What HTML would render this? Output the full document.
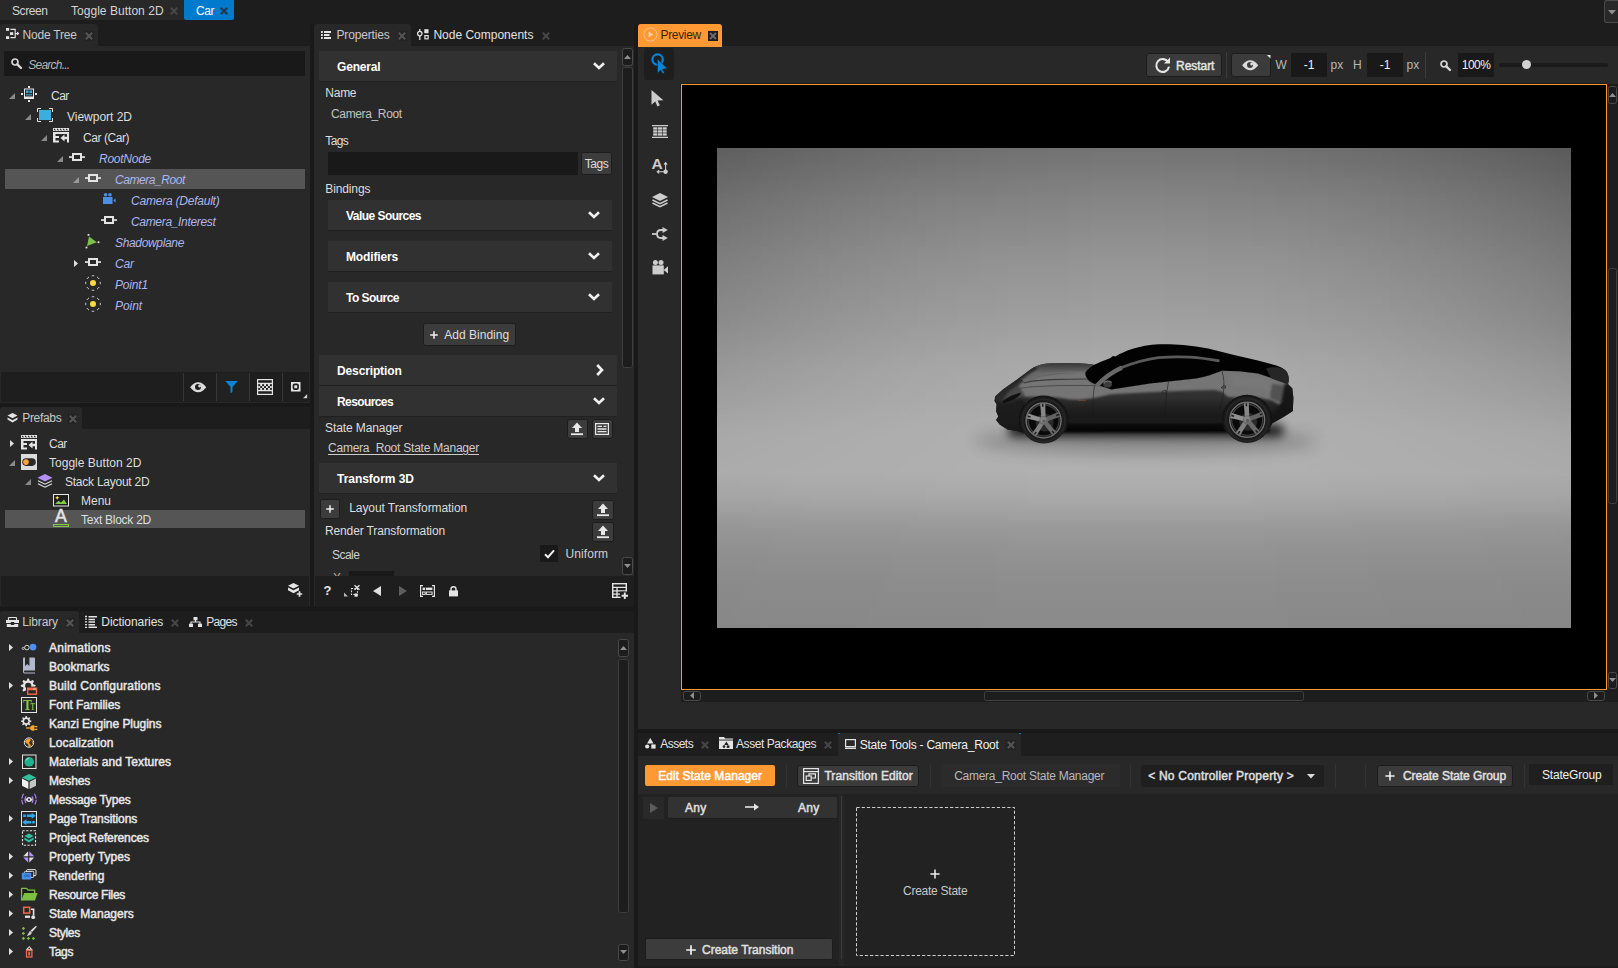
<!DOCTYPE html>
<html lang="en"><head><meta charset="utf-8"><title>Kanzi Studio - Car</title>
<style>
html,body{margin:0;padding:0;overflow:hidden;}
body{width:1618px;height:968px;overflow:hidden;background:#1d1d1d;font-family:"Liberation Sans", sans-serif;font-size:12px;color:#dedede;position:relative;}
div,svg,.t{position:absolute;box-sizing:border-box;}
.t{white-space:pre;display:block;}
svg{overflow:visible;}
</style></head><body>
<div style="left:310px;top:24px;width:4px;height:583px;background:#191919;"></div>
<div style="left:634px;top:24px;width:4px;height:944px;background:#191919;"></div>
<div style="left:0px;top:403px;width:310px;height:4px;background:#191919;"></div>
<div style="left:0px;top:607px;width:634px;height:4px;background:#191919;"></div>
<div style="left:0px;top:0px;width:184px;height:20px;background:#282828;"></div>
<span class="t" style="top:2.5px;line-height:16px;font-size:12px;color:#d4d4d4;letter-spacing:-0.405px;left:12px;">Screen</span>
<span class="t" style="top:2.5px;line-height:16px;font-size:12px;color:#d4d4d4;letter-spacing:0.034px;left:71px;">Toggle Button 2D</span>
<svg style="left:174px;top:10.8px;" width="1" height="1" viewBox="0 0 1 1"><path d="M-3.2 -3.2L3.2 3.2M3.2 -3.2L-3.2 3.2" stroke="#474747" stroke-width="2" fill="none"/></svg>
<div style="left:184px;top:0px;width:50px;height:20px;background:#007acc;border-radius:0 0 2px 2px;"></div>
<span class="t" style="top:2.5px;line-height:16px;font-size:12px;color:#ffffff;letter-spacing:-0.381px;left:196px;">Car</span>
<svg style="left:224.3px;top:10.8px;" width="1" height="1" viewBox="0 0 1 1"><path d="M-3.3 -3.3L3.3 3.3M3.3 -3.3L-3.3 3.3" stroke="#1e3a52" stroke-width="2.2" fill="none"/></svg>
<div style="left:1604px;top:0px;width:14px;height:23px;background:#282828;border:1px solid #4a4a4a;border-right:none;border-radius:3px 0 0 3px;"></div>
<svg style="left:1608.0px;top:9.55px;" width="8" height="4.5" viewBox="0 0 8 4.5"><path d="M0 0H8L4.0 4.5Z" fill="#8f8f8f"/></svg>
<div style="left:0px;top:24px;width:98px;height:22px;background:#282828;border-radius:3px 3px 0 0;"></div>
<svg style="left:5.6px;top:28px;" width="13" height="11" viewBox="0 0 13 11"><rect x="0" y="0" width="3.2" height="2.8" fill="#e4e4e4"/><rect x="4" y="4.2" width="3.2" height="2.8" fill="#e4e4e4"/><rect x="0" y="8.2" width="3.2" height="2.8" fill="#e4e4e4"/><path d="M4.5 1.4H9.2V9.6H4.5M9.2 5.6H12.5M11.2 4.2l1.3 1.4-1.3 1.4" stroke="#e4e4e4" stroke-width="1.1" fill="none"/></svg>
<span class="t" style="top:26.6px;line-height:16px;font-size:12px;color:#c9c9c9;letter-spacing:-0.227px;left:22.6px;">Node Tree</span>
<div style="left:84.5px;top:31px;width:9px;height:10px;background:#232323;"></div>
<svg style="left:89px;top:35.8px;" width="1" height="1" viewBox="0 0 1 1"><path d="M-3.2 -3.2L3.2 3.2M3.2 -3.2L-3.2 3.2" stroke="#555" stroke-width="2" fill="none"/></svg>
<div style="left:0px;top:46px;width:310px;height:357px;background:#282828;"></div>
<div style="left:4px;top:51px;width:301px;height:25px;background:#191919;"></div>
<svg style="left:10.8px;top:58.2px;" width="11" height="11" viewBox="0 0 11 11"><circle cx="4" cy="4" r="3" fill="none" stroke="#d8d8d8" stroke-width="1.7"/><path d="M6.3 6.3L10 10" stroke="#d8d8d8" stroke-width="2.4" stroke-linecap="round"/></svg>
<span class="t" style="top:56.599999999999994px;line-height:16px;font-size:12px;color:#b4b4b4;font-style:italic;letter-spacing:-0.781px;left:28.3px;">Search...</span>
<svg style="left:9.3px;top:92.6px;" width="6" height="6" viewBox="0 0 6 6"><path d="M6 0V6H0Z" fill="#8a8a8a"/></svg>
<svg style="left:21px;top:86.0px;" width="16" height="16" viewBox="0 0 16 16"><rect x="7" y="0" width="2" height="2" fill="#e4e4e4"/><rect x="7" y="14" width="2" height="2" fill="#e4e4e4"/><rect x="0" y="7" width="2" height="2" fill="#e4e4e4"/><rect x="14" y="7" width="2" height="2" fill="#e4e4e4"/>
<rect x="3" y="2.5" width="10" height="10.5" fill="#e4e4e4"/><rect x="4" y="3.5" width="8" height="7" fill="#2a2a2a"/>
<rect x="5" y="4.5" width="2.5" height="2.5" fill="#38b0e6"/><rect x="8.5" y="4.5" width="2.5" height="2.5" fill="#38b0e6"/><rect x="5" y="8.3" width="6" height="1" fill="#38b0e6"/></svg>
<span class="t" style="top:87.5px;line-height:16px;font-size:12px;color:#dedede;letter-spacing:-0.515px;left:51px;">Car</span>
<svg style="left:25.3px;top:113.6px;" width="6" height="6" viewBox="0 0 6 6"><path d="M6 0V6H0Z" fill="#8a8a8a"/></svg>
<svg style="left:37px;top:107.7px;" width="16" height="14" viewBox="0 0 16 14"><rect x="2" y="2" width="12" height="10" fill="#3aaedd"/>
<path d="M0.5 4V0.5H4M12 0.5H15.5V4M15.5 10V13.5H12M4 13.5H0.5V10" stroke="#e4e4e4" stroke-width="1" fill="none"/></svg>
<span class="t" style="top:108.5px;line-height:16px;font-size:12px;color:#dedede;letter-spacing:-0.014px;left:67px;">Viewport 2D</span>
<svg style="left:41.3px;top:134.6px;" width="6" height="6" viewBox="0 0 6 6"><path d="M6 0V6H0Z" fill="#8a8a8a"/></svg>
<svg style="left:53px;top:128.0px;" width="16" height="15" viewBox="0 0 16 15"><rect x="0" y="0" width="16" height="3" fill="#e4e4e4"/>
<path d="M1 0.8l1.5 1.6M4 0.8l1.5 1.6M7 0.8l1.5 1.6M10 0.8l1.5 1.6M13 0.8l1.5 1.6" stroke="#282828" stroke-width="1.1"/>
<path d="M0 4H16V6H2.5V8H6V10H2.5V12.5H6V14.5H0Z" fill="#e4e4e4"/>
<path d="M7.5 10L11.5 6.5V8.7H16V11.3H11.5V13.5Z" fill="#e4e4e4"/><rect x="14" y="6" width="2" height="8.5" fill="#e4e4e4"/></svg>
<span class="t" style="top:129.5px;line-height:16px;font-size:12px;color:#dedede;letter-spacing:-0.444px;left:83px;">Car (Car)</span>
<svg style="left:57.3px;top:155.6px;" width="6" height="6" viewBox="0 0 6 6"><path d="M6 0V6H0Z" fill="#8a8a8a"/></svg>
<svg style="left:69px;top:153.0px;" width="16" height="8" viewBox="0 0 16 8"><rect x="4" y="1" width="8" height="6" fill="none" stroke="#e4e4e4" stroke-width="2"/><rect x="0" y="3.2" width="3.5" height="1.7" fill="#e4e4e4"/><rect x="12.5" y="3.2" width="3.5" height="1.7" fill="#e4e4e4"/></svg>
<span class="t" style="top:150.5px;line-height:16px;font-size:12px;color:#aeb6ee;font-style:italic;letter-spacing:-0.256px;left:99px;">RootNode</span>
<div style="left:5px;top:169.0px;width:300px;height:20px;background:#555555;"></div>
<svg style="left:73.3px;top:176.6px;" width="6" height="6" viewBox="0 0 6 6"><path d="M6 0V6H0Z" fill="#9a9a9a"/></svg>
<svg style="left:85px;top:174.0px;" width="16" height="8" viewBox="0 0 16 8"><rect x="4" y="1" width="8" height="6" fill="none" stroke="#e4e4e4" stroke-width="2"/><rect x="0" y="3.2" width="3.5" height="1.7" fill="#e4e4e4"/><rect x="12.5" y="3.2" width="3.5" height="1.7" fill="#e4e4e4"/></svg>
<span class="t" style="top:171.5px;line-height:16px;font-size:12px;color:#aeb6ee;font-style:italic;letter-spacing:-0.428px;left:115px;">Camera_Root</span>
<svg style="left:102.6px;top:193.2px;" width="13" height="11" viewBox="0 0 13 11"><circle cx="2.6" cy="1.8" r="1.8" fill="#4b8fe9"/><circle cx="7" cy="1.8" r="1.8" fill="#4b8fe9"/><rect x="0" y="4" width="9.5" height="7" fill="#4b8fe9"/><path d="M10.3 7.5L12.5 5.3V9.7Z" fill="#4b8fe9"/></svg>
<span class="t" style="top:192.5px;line-height:16px;font-size:12px;color:#aeb6ee;font-style:italic;letter-spacing:-0.221px;left:131px;">Camera (Default)</span>
<svg style="left:101px;top:216.0px;" width="16" height="8" viewBox="0 0 16 8"><rect x="4" y="1" width="8" height="6" fill="none" stroke="#e4e4e4" stroke-width="2"/><rect x="0" y="3.2" width="3.5" height="1.7" fill="#e4e4e4"/><rect x="12.5" y="3.2" width="3.5" height="1.7" fill="#e4e4e4"/></svg>
<span class="t" style="top:213.5px;line-height:16px;font-size:12px;color:#aeb6ee;font-style:italic;letter-spacing:-0.325px;left:131px;">Camera_Interest</span>
<svg style="left:85.4px;top:233.5px;" width="15" height="15" viewBox="0 0 15 15"><path d="M4 2.5L11.8 8.2L2 12Z" fill="#7dc04b"/><rect x="2.6" y="0" width="1.8" height="1.8" fill="#e4e4e4"/><rect x="12.6" y="7.3" width="1.8" height="1.8" fill="#e4e4e4"/><rect x="0.6" y="12.6" width="1.8" height="1.8" fill="#e4e4e4"/></svg>
<span class="t" style="top:234.5px;line-height:16px;font-size:12px;color:#aeb6ee;font-style:italic;letter-spacing:-0.339px;left:115px;">Shadowplane</span>
<svg style="left:74.3px;top:260.0px;" width="4" height="7" viewBox="0 0 4 7"><path d="M0 0L4 3.5L0 7Z" fill="#e0e0e0"/></svg>
<svg style="left:85px;top:258.0px;" width="16" height="8" viewBox="0 0 16 8"><rect x="4" y="1" width="8" height="6" fill="none" stroke="#e4e4e4" stroke-width="2"/><rect x="0" y="3.2" width="3.5" height="1.7" fill="#e4e4e4"/><rect x="12.5" y="3.2" width="3.5" height="1.7" fill="#e4e4e4"/></svg>
<span class="t" style="top:255.5px;line-height:16px;font-size:12px;color:#aeb6ee;font-style:italic;letter-spacing:-0.215px;left:115px;">Car</span>
<svg style="left:85px;top:275.3px;" width="16" height="16" viewBox="0 0 16 16"><circle cx="8" cy="8" r="7.3" fill="none" stroke="#e4e4e4" stroke-width="1" stroke-dasharray="2.6 3.1" stroke-dashoffset="1.3"/><circle cx="8" cy="8" r="3" fill="#ffd83e"/></svg>
<span class="t" style="top:276.5px;line-height:16px;font-size:12px;color:#aeb6ee;font-style:italic;letter-spacing:-0.172px;left:115px;">Point1</span>
<svg style="left:85px;top:296.3px;" width="16" height="16" viewBox="0 0 16 16"><circle cx="8" cy="8" r="7.3" fill="none" stroke="#e4e4e4" stroke-width="1" stroke-dasharray="2.6 3.1" stroke-dashoffset="1.3"/><circle cx="8" cy="8" r="3" fill="#ffd83e"/></svg>
<span class="t" style="top:297.5px;line-height:16px;font-size:12px;color:#aeb6ee;font-style:italic;letter-spacing:-0.072px;left:115px;">Point</span>
<div style="left:1px;top:372px;width:308px;height:30px;background:#1e1e1e;"></div>
<div style="left:183px;top:373px;width:1px;height:28px;background:#383838;"></div>
<div style="left:216px;top:373px;width:1px;height:28px;background:#383838;"></div>
<div style="left:249px;top:373px;width:1px;height:28px;background:#383838;"></div>
<div style="left:282px;top:373px;width:1px;height:28px;background:#383838;"></div>
<svg style="left:189.8px;top:381.8px;" width="16.4" height="10.4" viewBox="0 0 16.4 10.4"><path d="M0.2 5.2Q3.8 0.2 8.2 0.2Q12.6 0.2 16.2 5.2Q12.6 10.2 8.2 10.2Q3.8 10.2 0.2 5.2Z" fill="#dcdcdc"/><circle cx="8" cy="5" r="3" fill="#1e1e1e"/><circle cx="9.6" cy="4" r="1.5" fill="#dcdcdc"/></svg>
<div style="left:217px;top:373px;width:32px;height:28px;background:#212121;"></div>
<svg style="left:224.5px;top:381px;" width="13" height="12.5" viewBox="0 0 13 12.5"><path d="M0.3 0H12.7L7.5 6V11L5.5 12.3V6Z" fill="#0a84d8"/></svg>
<svg style="left:257px;top:379px;" width="16" height="16" viewBox="0 0 16 16"><rect x="0.6" y="0.6" width="14.8" height="14.8" fill="none" stroke="#e4e4e4" stroke-width="1.2"/><path d="M1 4.4H15M1 11.6H15" stroke="#e4e4e4" stroke-width="1.2"/><rect x="1.2" y="5" width="13.6" height="6" fill="#e4e4e4"/><rect x="1.20" y="5.20" width="1.95" height="1.9" fill="#1e1e1e"/><rect x="5.10" y="5.20" width="1.95" height="1.9" fill="#1e1e1e"/><rect x="9.00" y="5.20" width="1.95" height="1.9" fill="#1e1e1e"/><rect x="12.90" y="5.20" width="1.95" height="1.9" fill="#1e1e1e"/><rect x="3.15" y="7.10" width="1.95" height="1.9" fill="#1e1e1e"/><rect x="7.05" y="7.10" width="1.95" height="1.9" fill="#1e1e1e"/><rect x="10.95" y="7.10" width="1.95" height="1.9" fill="#1e1e1e"/><rect x="1.20" y="9.00" width="1.95" height="1.9" fill="#1e1e1e"/><rect x="5.10" y="9.00" width="1.95" height="1.9" fill="#1e1e1e"/><rect x="9.00" y="9.00" width="1.95" height="1.9" fill="#1e1e1e"/><rect x="12.90" y="9.00" width="1.95" height="1.9" fill="#1e1e1e"/></svg>
<svg style="left:290.7px;top:381.8px;" width="9.5" height="9.5" viewBox="0 0 9.5 9.5"><rect width="9.5" height="9.5" fill="#e4e4e4"/><rect x="1.6" y="1.6" width="6.3" height="6.3" rx="2" fill="#1e1e1e"/><rect x="3.3" y="3.3" width="2.9" height="2.9" fill="#e4e4e4"/></svg>
<svg style="left:303px;top:394px;" width="4.2" height="4.2" viewBox="0 0 4.2 4.2"><path d="M4.2 0V4.2H0Z" fill="#d0d0d0"/></svg>
<div style="left:0px;top:407px;width:82px;height:22px;background:#282828;border-radius:3px 3px 0 0;"></div>
<svg style="left:6.6px;top:412.6px;" width="11" height="10" viewBox="0 0 11 10"><path d="M5.5 0L10.5 2.6L5.5 5.2L0.5 2.6Z" fill="#e4e4e4"/><path d="M0.5 4.6L5.5 7.2L10.5 4.6V6.6L5.5 9.4L0.5 6.6Z" fill="#e4e4e4"/></svg>
<span class="t" style="top:410.0px;line-height:16px;font-size:12px;color:#c9c9c9;letter-spacing:-0.337px;left:22.3px;">Prefabs</span>
<div style="left:68px;top:414px;width:9px;height:10px;background:#232323;"></div>
<svg style="left:72.8px;top:419px;" width="1" height="1" viewBox="0 0 1 1"><path d="M-3.2 -3.2L3.2 3.2M3.2 -3.2L-3.2 3.2" stroke="#555" stroke-width="2" fill="none"/></svg>
<div style="left:0px;top:429px;width:310px;height:177px;background:#282828;"></div>
<svg style="left:9.9px;top:440.0px;" width="4" height="7" viewBox="0 0 4 7"><path d="M0 0L4 3.5L0 7Z" fill="#e0e0e0"/></svg>
<svg style="left:21px;top:434.5px;" width="16" height="15" viewBox="0 0 16 15"><rect x="0" y="0" width="16" height="3" fill="#e4e4e4"/>
<path d="M1 0.8l1.5 1.6M4 0.8l1.5 1.6M7 0.8l1.5 1.6M10 0.8l1.5 1.6M13 0.8l1.5 1.6" stroke="#282828" stroke-width="1.1"/>
<path d="M0 4H16V6H2.5V8H6V10H2.5V12.5H6V14.5H0Z" fill="#e4e4e4"/>
<path d="M7.5 10L11.5 6.5V8.7H16V11.3H11.5V13.5Z" fill="#e4e4e4"/><rect x="14" y="6" width="2" height="8.5" fill="#e4e4e4"/></svg>
<span class="t" style="top:435.5px;line-height:16px;font-size:12px;color:#dedede;letter-spacing:-0.515px;left:49px;">Car</span>
<svg style="left:9.3px;top:459.6px;" width="6" height="6" viewBox="0 0 6 6"><path d="M6 0V6H0Z" fill="#8a8a8a"/></svg>
<svg style="left:21px;top:454.0px;" width="16" height="16" viewBox="0 0 16 16"><rect width="16" height="16" fill="#dcdcdc"/><rect x="1.2" y="4.3" width="13.6" height="7.6" rx="3.8" fill="#2a2a2a"/><circle cx="5" cy="8.1" r="2.8" fill="#ffa33a"/></svg>
<span class="t" style="top:454.5px;line-height:16px;font-size:12px;color:#dedede;letter-spacing:0.021px;left:49px;">Toggle Button 2D</span>
<svg style="left:25.3px;top:478.6px;" width="6" height="6" viewBox="0 0 6 6"><path d="M6 0V6H0Z" fill="#8a8a8a"/></svg>
<svg style="left:37px;top:473.9px;" width="16" height="14" viewBox="0 0 16 14"><path d="M8 0L15.5 3.7L8 7.4L0.5 3.7Z" fill="#b48ff5"/><path d="M1 6.7L8 10.2L15 6.7M1 9.7L8 13.2L15 9.7" stroke="#e4e4e4" stroke-width="1.1" fill="none"/></svg>
<span class="t" style="top:473.5px;line-height:16px;font-size:12px;color:#dedede;letter-spacing:-0.244px;left:65px;">Stack Layout 2D</span>
<svg style="left:53px;top:493.8px;" width="16" height="12.5" viewBox="0 0 16 12.5"><rect x="0.5" y="0.5" width="15" height="11.5" fill="#1e1e1e" stroke="#e4e4e4" stroke-width="1"/><path d="M2 10L5.5 6.8L8 8.6L11 5.5L14 10Z" fill="#86c84a"/><path d="M4.2 1.8l.7 1.3 1.3.7-1.3.7-.7 1.3-.7-1.3-1.3-.7 1.3-.7z" fill="#ffe23a"/></svg>
<span class="t" style="top:492.5px;line-height:16px;font-size:12px;color:#dedede;letter-spacing:-0.008px;left:81px;">Menu</span>
<div style="left:5px;top:510.0px;width:300px;height:18px;background:#555555;"></div>
<span class="t" style="left:54.9px;top:506.8px;font-size:17.6px;line-height:18px;-webkit-text-stroke:0.55px #e4e4e4;color:#e4e4e4;">A</span>
<svg style="left:53px;top:524.0px;" width="16" height="3" viewBox="0 0 16 3"><rect x="0.5" y="0.5" width="15" height="2" fill="none" stroke="#86c84a" stroke-width="1"/></svg>
<span class="t" style="top:511.5px;line-height:16px;font-size:12px;color:#dedede;letter-spacing:-0.258px;left:81px;">Text Block 2D</span>
<div style="left:1px;top:576px;width:308px;height:30px;background:#1e1e1e;"></div>
<svg style="left:287.6px;top:583px;" width="15" height="14" viewBox="0 0 15 14"><path d="M5.5 0L11 2.8L5.5 5.6L0 2.8Z" fill="#e4e4e4"/><path d="M0 4.4L5.5 7.2L11 4.4V7.2L5.5 10.2L0 7.2Z" fill="#e4e4e4"/><path d="M11.5 8V14M8.5 11H14.5" stroke="#1e1e1e" stroke-width="3.4"/><path d="M11.5 8.3V13.7M8.8 11H14.2" stroke="#e4e4e4" stroke-width="1.7"/></svg>
<div style="left:314px;top:24px;width:97px;height:22px;background:#282828;border-radius:3px 3px 0 0;"></div>
<svg style="left:321px;top:31.4px;" width="10" height="8" viewBox="0 0 10 8"><path d="M0 1H1.8M0 4H1.8M0 7H1.8" stroke="#e4e4e4" stroke-width="1.8"/><path d="M3 1H10M3 4H8.5M3 7H10" stroke="#e4e4e4" stroke-width="1.8"/></svg>
<span class="t" style="top:26.6px;line-height:16px;font-size:12px;color:#c9c9c9;letter-spacing:-0.17px;left:336.5px;">Properties</span>
<div style="left:397.5px;top:31px;width:9px;height:10px;background:#232323;"></div>
<svg style="left:402px;top:35.8px;" width="1" height="1" viewBox="0 0 1 1"><path d="M-3.2 -3.2L3.2 3.2M3.2 -3.2L-3.2 3.2" stroke="#555" stroke-width="2" fill="none"/></svg>
<svg style="left:417px;top:29.4px;" width="12" height="11" viewBox="0 0 12 11"><circle cx="2.8" cy="4.6" r="2.2" fill="none" stroke="#e4e4e4" stroke-width="1.3"/><path d="M2.8 0V2.2M2.8 7V11" stroke="#e4e4e4" stroke-width="1.3"/><rect x="7.3" y="0.2" width="4.2" height="4" fill="#e4e4e4"/><rect x="7.9" y="6.6" width="3.2" height="3.2" fill="none" stroke="#e4e4e4" stroke-width="1.2"/></svg>
<span class="t" style="top:26.6px;line-height:16px;font-size:12px;color:#e2e2e2;letter-spacing:-0.004px;left:433.4px;">Node Components</span>
<svg style="left:546.4px;top:35.8px;" width="1" height="1" viewBox="0 0 1 1"><path d="M-3.2 -3.2L3.2 3.2M3.2 -3.2L-3.2 3.2" stroke="#474747" stroke-width="2" fill="none"/></svg>
<div style="left:314px;top:46px;width:320px;height:560px;background:#282828;"></div>
<div style="left:319px;top:51px;width:298px;height:31px;background:#313131;border-bottom:1px solid #202020;"></div>
<span class="t" style="top:58.599999999999994px;line-height:16px;font-size:12px;color:#ffffff;font-weight:bold;letter-spacing:-0.186px;left:337px;">General</span>
<svg style="left:593px;top:62px;" width="12" height="8" viewBox="0 0 12 8"><path d="M1 1.2L6 6L11 1.2" stroke="#f0f0f0" stroke-width="2.6" fill="none"/></svg>
<span class="t" style="top:85.0px;line-height:16px;font-size:12px;color:#dedede;letter-spacing:-0.254px;left:325.3px;">Name</span>
<span class="t" style="top:105.8px;line-height:16px;font-size:12px;color:#c2c2c2;letter-spacing:-0.355px;left:331px;">Camera_Root</span>
<span class="t" style="top:133.0px;line-height:16px;font-size:12px;color:#dedede;letter-spacing:-0.59px;left:325.3px;">Tags</span>
<div style="left:328px;top:152px;width:250px;height:23px;background:#191919;"></div>
<div style="left:581px;top:152px;width:30.5px;height:23px;background:#3c3c3c;border:1px solid #1c1c1c;border-radius:2.5px;"></div>
<span class="t" style="top:155.8px;line-height:16px;font-size:12px;color:#dedede;letter-spacing:-0.465px;left:584.7px;">Tags</span>
<span class="t" style="top:181.0px;line-height:16px;font-size:12px;color:#dedede;letter-spacing:-0.129px;left:325.3px;">Bindings</span>
<div style="left:328px;top:200px;width:284px;height:31px;background:#313131;border-bottom:1px solid #202020;"></div>
<span class="t" style="top:207.6px;line-height:16px;font-size:12px;color:#ffffff;font-weight:bold;letter-spacing:-0.542px;left:346px;">Value Sources</span>
<svg style="left:588px;top:211px;" width="12" height="8" viewBox="0 0 12 8"><path d="M1 1.2L6 6L11 1.2" stroke="#f0f0f0" stroke-width="2.6" fill="none"/></svg>
<div style="left:328px;top:241px;width:284px;height:31px;background:#313131;border-bottom:1px solid #202020;"></div>
<span class="t" style="top:248.60000000000002px;line-height:16px;font-size:12px;color:#ffffff;font-weight:bold;letter-spacing:-0.149px;left:346px;">Modifiers</span>
<svg style="left:588px;top:252px;" width="12" height="8" viewBox="0 0 12 8"><path d="M1 1.2L6 6L11 1.2" stroke="#f0f0f0" stroke-width="2.6" fill="none"/></svg>
<div style="left:328px;top:282px;width:284px;height:31px;background:#313131;border-bottom:1px solid #202020;"></div>
<span class="t" style="top:289.6px;line-height:16px;font-size:12px;color:#ffffff;font-weight:bold;letter-spacing:-0.533px;left:346px;">To Source</span>
<svg style="left:588px;top:293px;" width="12" height="8" viewBox="0 0 12 8"><path d="M1 1.2L6 6L11 1.2" stroke="#f0f0f0" stroke-width="2.6" fill="none"/></svg>
<div style="left:422.6px;top:323.4px;width:93.8px;height:23px;background:#3c3c3c;border:1px solid #1c1c1c;border-radius:2.5px;"></div>
<svg style="left:434px;top:335px;" width="1" height="1" viewBox="0 0 1 1"><path d="M-3.8 0H3.8M0 -3.8V3.8" stroke="#f0f0f0" stroke-width="1.5"/></svg>
<span class="t" style="top:327.0px;line-height:16px;font-size:12px;color:#dedede;letter-spacing:0.026px;left:444.2px;">Add Binding</span>
<div style="left:319px;top:355px;width:298px;height:31px;background:#313131;border-bottom:1px solid #202020;"></div>
<span class="t" style="top:362.6px;line-height:16px;font-size:12px;color:#ffffff;font-weight:bold;letter-spacing:-0.129px;left:337px;">Description</span>
<svg style="left:595.5px;top:364px;" width="8" height="12" viewBox="0 0 8 12"><path d="M1.2 1L6 6L1.2 11" stroke="#f0f0f0" stroke-width="2.6" fill="none"/></svg>
<div style="left:319px;top:386px;width:298px;height:31px;background:#313131;border-bottom:1px solid #202020;"></div>
<span class="t" style="top:393.6px;line-height:16px;font-size:12px;color:#ffffff;font-weight:bold;letter-spacing:-0.597px;left:337px;">Resources</span>
<svg style="left:593px;top:397px;" width="12" height="8" viewBox="0 0 12 8"><path d="M1 1.2L6 6L11 1.2" stroke="#f0f0f0" stroke-width="2.6" fill="none"/></svg>
<span class="t" style="top:419.8px;line-height:16px;font-size:12px;color:#dedede;letter-spacing:-0.094px;left:325px;">State Manager</span>
<div style="left:566.5px;top:419px;width:21.5px;height:20px;background:#3c3c3c;border:1px solid #1c1c1c;border-radius:2.5px;"></div>
<svg style="left:570.2px;top:422px;" width="14" height="14" viewBox="0 0 14 14"><path d="M7 0.5L12 6H9V10H5V6H2Z" fill="#e8e8e8"/><rect x="1" y="11.3" width="12" height="1.8" fill="#e8e8e8"/></svg>
<div style="left:591.5px;top:419px;width:21.5px;height:20px;background:#3c3c3c;border:1px solid #1c1c1c;border-radius:2.5px;"></div>
<svg style="left:595.2px;top:423px;" width="14" height="12" viewBox="0 0 14 12"><rect x="0.6" y="0.6" width="12.8" height="10.8" fill="none" stroke="#e8e8e8" stroke-width="1.2"/><path d="M2.5 3.4H7M8.5 3.4H11.5M2.5 6H11.5M2.5 8.6H11.5" stroke="#e8e8e8" stroke-width="1.3"/></svg>
<span class="t" style="top:439.6px;line-height:16px;font-size:12px;color:#cdcdcd;letter-spacing:-0.23px;left:328px;text-decoration:underline;text-underline-offset:1.5px;">Camera_Root State Manager</span>
<div style="left:319px;top:463px;width:298px;height:31px;background:#313131;border-bottom:1px solid #202020;"></div>
<span class="t" style="top:470.6px;line-height:16px;font-size:12px;color:#ffffff;font-weight:bold;letter-spacing:-0.03px;left:337px;">Transform 3D</span>
<svg style="left:593px;top:474px;" width="12" height="8" viewBox="0 0 12 8"><path d="M1 1.2L6 6L11 1.2" stroke="#f0f0f0" stroke-width="2.6" fill="none"/></svg>
<div style="left:320px;top:499px;width:20px;height:20px;background:#3c3c3c;border:1px solid #1c1c1c;border-radius:2.5px;"></div>
<svg style="left:330px;top:509.2px;" width="1" height="1" viewBox="0 0 1 1"><path d="M-3.8 0H3.8M0 -3.8V3.8" stroke="#f0f0f0" stroke-width="1.5"/></svg>
<span class="t" style="top:500.0px;line-height:16px;font-size:12px;color:#dedede;letter-spacing:-0.067px;left:349.2px;">Layout Transformation</span>
<div style="left:592px;top:500px;width:21.5px;height:20px;background:#3c3c3c;border:1px solid #1c1c1c;border-radius:2.5px;"></div>
<svg style="left:595.6px;top:503px;" width="14" height="14" viewBox="0 0 14 14"><path d="M7 0.5L12 6H9V10H5V6H2Z" fill="#e8e8e8"/><rect x="1" y="11.3" width="12" height="1.8" fill="#e8e8e8"/></svg>
<span class="t" style="top:523.0px;line-height:16px;font-size:12px;color:#dedede;letter-spacing:-0.13px;left:325px;">Render Transformation</span>
<div style="left:592px;top:522px;width:21.5px;height:20px;background:#3c3c3c;border:1px solid #1c1c1c;border-radius:2.5px;"></div>
<svg style="left:595.6px;top:525px;" width="14" height="14" viewBox="0 0 14 14"><path d="M7 0.5L12 6H9V10H5V6H2Z" fill="#e8e8e8"/><rect x="1" y="11.3" width="12" height="1.8" fill="#e8e8e8"/></svg>
<span class="t" style="top:547.0px;line-height:16px;font-size:12px;color:#d0d0d0;letter-spacing:-0.526px;left:332px;">Scale</span>
<div style="left:540px;top:545px;width:18px;height:17px;background:#191919;"></div>
<svg style="left:543.5px;top:548.5px;" width="11" height="10" viewBox="0 0 11 10"><path d="M1 5.2L4 8.2L10 1.4" stroke="#f0f0f0" stroke-width="2" fill="none"/></svg>
<span class="t" style="top:546.0px;line-height:16px;font-size:12px;color:#d0d0d0;letter-spacing:0.112px;left:565.4px;">Uniform</span>
<span class="t" style="top:569.5px;line-height:16px;font-size:12px;color:#b0b0b0;left:333px;">X</span>
<div style="left:349px;top:571px;width:45px;height:6px;background:#191919;"></div>
<div style="left:620px;top:46px;width:14px;height:530px;background:#282828;"></div>
<div style="left:622px;top:48px;width:10.5px;height:17.5px;background:#1c1c1c;border:1px solid #4a4a4a;border-radius:2.5px;"></div>
<svg style="left:623.75px;top:54.75px;" width="7" height="4" viewBox="0 0 7 4"><path d="M0 4H7L3.5 0Z" fill="#8f8f8f"/></svg>
<div style="left:622px;top:67px;width:10.5px;height:301px;background:#1d1d1d;border:1px solid #3f3f3f;border-radius:2.5px;"></div>
<div style="left:622px;top:557px;width:10.5px;height:17.5px;background:#1c1c1c;border:1px solid #4a4a4a;border-radius:2.5px;"></div>
<svg style="left:623.75px;top:563.75px;" width="7" height="4" viewBox="0 0 7 4"><path d="M0 0H7L3.5 4Z" fill="#8f8f8f"/></svg>
<div style="left:315px;top:576px;width:319px;height:30px;background:#1e1e1e;"></div>
<span class="t" style="left:323.6px;top:582.6px;font-size:13px;line-height:16px;font-weight:bold;color:#e4e4e4;">?</span>
<svg style="left:344px;top:585px;" width="16" height="12" viewBox="0 0 16 12"><path d="M0 7.5V11.5H4Z" fill="#b8b8b8"/><rect x="7.5" y="3.5" width="6" height="6" fill="none" stroke="#e4e4e4" stroke-width="1.1" stroke-dasharray="1.6 1.3"/><rect x="10.5" y="8.5" width="3.2" height="3.2" fill="#e4e4e4"/><path d="M10.5 0.3L15.5 4.8M15.5 0.3L10.5 4.8" stroke="#e4e4e4" stroke-width="1.4"/></svg>
<svg style="left:373px;top:586px;" width="8" height="10" viewBox="0 0 8 10"><path d="M8 0V10L0 5Z" fill="#e0e0e0"/></svg>
<svg style="left:399px;top:586px;" width="8" height="10" viewBox="0 0 8 10"><path d="M0 0V10L8 5Z" fill="#5e5e5e"/></svg>
<svg style="left:419.6px;top:584.6px;" width="15" height="12" viewBox="0 0 15 12"><path d="M3 0.6H0.6V11.4H3M12 0.6H14.4V11.4H12" stroke="#e4e4e4" stroke-width="1.2" fill="none"/><rect x="2.6" y="2.6" width="2.6" height="2.4" fill="#e4e4e4"/><rect x="6" y="2.6" width="6.4" height="2.4" fill="#e4e4e4"/><rect x="2.6" y="7" width="2.6" height="2.4" fill="none" stroke="#e4e4e4" stroke-width="1"/><rect x="6.3" y="7" width="5.8" height="2.4" fill="none" stroke="#e4e4e4" stroke-width="1"/></svg>
<svg style="left:448.7px;top:586px;" width="9" height="10.5" viewBox="0 0 9 10.5"><path d="M2 5V3Q2 0.7 4.5 0.7Q7 0.7 7 3V5" stroke="#e4e4e4" stroke-width="1.4" fill="none"/><rect x="0" y="4.4" width="9" height="6" fill="#e4e4e4"/></svg>
<svg style="left:612px;top:583px;" width="17" height="16" viewBox="0 0 17 16"><rect x="0.7" y="0.7" width="13.6" height="13.6" fill="none" stroke="#e4e4e4" stroke-width="1.4"/><path d="M1 4.3H14M1 7.8H14M1 11.2H8M5 4.3V14" stroke="#e4e4e4" stroke-width="1.3"/><rect x="8.5" y="8.6" width="8" height="7.4" fill="#1e1e1e"/><path d="M12.8 9.5V16M9.6 12.7H16" stroke="#e4e4e4" stroke-width="1.9"/></svg>
<div style="left:0px;top:611px;width:79px;height:22px;background:#282828;border-radius:3px 3px 0 0;"></div>
<svg style="left:5.6px;top:616.6px;" width="13" height="10" viewBox="0 0 13 10"><path d="M2.5 3V1.2Q2.5 0.5 3.2 0.5H9.8Q10.5 0.5 10.5 1.2V3" stroke="#e4e4e4" stroke-width="1.2" fill="none"/><path d="M0 3H13V6H8.2V5H4.8V6H0Z" fill="#e4e4e4"/><path d="M0.8 7H4.8V8H8.2V7H12.2V10H0.8Z" fill="#e4e4e4"/></svg>
<span class="t" style="top:614.0px;line-height:16px;font-size:12px;color:#c9c9c9;letter-spacing:-0.155px;left:22.3px;">Library</span>
<div style="left:65.6px;top:618px;width:9px;height:10px;background:#232323;"></div>
<svg style="left:70.2px;top:622.8px;" width="1" height="1" viewBox="0 0 1 1"><path d="M-3.2 -3.2L3.2 3.2M3.2 -3.2L-3.2 3.2" stroke="#555" stroke-width="2" fill="none"/></svg>
<svg style="left:85px;top:615.6px;" width="12" height="12" viewBox="0 0 12 12"><path d="M0 0.5H2M0 3.2H2M0 5.9H2M0 8.6H2M0 11.3H2" stroke="#e4e4e4" stroke-width="1.3"/><path d="M3.5 0.7H12M3.5 3.4H10M3.5 6.1H10M3.5 8.8H10M3.5 11.3H12" stroke="#e4e4e4" stroke-width="1.5"/></svg>
<span class="t" style="top:614.0px;line-height:16px;font-size:12px;color:#e2e2e2;letter-spacing:-0.059px;left:101.3px;">Dictionaries</span>
<svg style="left:175.2px;top:622.8px;" width="1" height="1" viewBox="0 0 1 1"><path d="M-3.2 -3.2L3.2 3.2M3.2 -3.2L-3.2 3.2" stroke="#474747" stroke-width="2" fill="none"/></svg>
<svg style="left:189px;top:616.6px;" width="13" height="10" viewBox="0 0 13 10"><rect x="4.5" y="0" width="4" height="3.3" fill="#e4e4e4"/><rect x="0" y="6.7" width="4" height="3.3" fill="#e4e4e4"/><rect x="9" y="6.7" width="4" height="3.3" fill="#e4e4e4"/><path d="M6.5 3V5H2V7M6.5 5H11V7" stroke="#e4e4e4" stroke-width="1.1" fill="none"/></svg>
<span class="t" style="top:614.0px;line-height:16px;font-size:12px;color:#e2e2e2;letter-spacing:-0.706px;left:206.3px;">Pages</span>
<svg style="left:249px;top:622.8px;" width="1" height="1" viewBox="0 0 1 1"><path d="M-3.2 -3.2L3.2 3.2M3.2 -3.2L-3.2 3.2" stroke="#474747" stroke-width="2" fill="none"/></svg>
<div style="left:0px;top:633px;width:634px;height:335px;background:#282828;"></div>
<svg style="left:9.2px;top:644.0px;" width="4" height="7" viewBox="0 0 4 7"><path d="M0 0L4 3.5L0 7Z" fill="#e0e0e0"/></svg>
<svg style="left:21px;top:639.5px;" width="16" height="16" viewBox="0 0 16 16"><circle cx="2.2" cy="8.4" r="1.1" fill="none" stroke="#d8d8d8" stroke-width="0.8"/><circle cx="5.9" cy="7.6" r="2.3" fill="none" stroke="#d8d8d8" stroke-width="1"/><circle cx="12" cy="7.1" r="3.4" fill="#4b8ff2"/></svg>
<span class="t" style="top:639.5px;line-height:16px;font-size:12px;color:#e8e8e8;-webkit-text-stroke:0.45px #e8e8e8;letter-spacing:0.233px;left:49px;">Animations</span>
<svg style="left:21px;top:656.9px;" width="16" height="17" viewBox="0 0 16 17"><path d="M2 1.5Q2 0.5 3 0.5H4V9L6.2 7L8.4 9V0.5H13Q14 0.5 14 1.5V13.5H4Q3 13.5 3 14.6Q3 15.6 4 15.6H14V16.6H3.6Q2 16.6 2 14.8Z" fill="#b4b8cc"/></svg>
<span class="t" style="top:658.5px;line-height:16px;font-size:12px;color:#e8e8e8;-webkit-text-stroke:0.45px #e8e8e8;letter-spacing:0.052px;left:49px;">Bookmarks</span>
<svg style="left:9.2px;top:682.0px;" width="4" height="7" viewBox="0 0 4 7"><path d="M0 0L4 3.5L0 7Z" fill="#e0e0e0"/></svg>
<svg style="left:21px;top:677.5px;" width="17" height="17" viewBox="0 0 17 17"><path d="M14.56 7.02L14.56 8.58L12.31 9.31L11.88 10.35L12.96 12.45L11.85 13.56L9.75 12.48L8.71 12.91L7.98 15.16L6.42 15.16L5.69 12.91L4.65 12.48L2.55 13.56L1.44 12.45L2.52 10.35L2.09 9.31L-0.16 8.58L-0.16 7.02L2.09 6.29L2.52 5.25L1.44 3.15L2.55 2.04L4.65 3.12L5.69 2.69L6.42 0.44L7.98 0.44L8.71 2.69L9.75 3.12L11.85 2.04L12.96 3.15L11.88 5.25L12.31 6.29Z" fill="#e4e4e4"/><circle cx="7.2" cy="7.8" r="3.11" fill="#282828"/><rect x="5" y="8.6" width="12" height="9" fill="#282828"/><rect x="6.7" y="10.2" width="8.8" height="6" fill="none" stroke="#f4694a" stroke-width="1.4"/><rect x="6.7" y="10.2" width="8.8" height="2" fill="#f4694a"/><rect x="12" y="10.6" width="2.6" height="0.9" fill="#ffd6cc"/></svg>
<span class="t" style="top:677.5px;line-height:16px;font-size:12px;color:#e8e8e8;-webkit-text-stroke:0.45px #e8e8e8;letter-spacing:0.21px;left:49px;">Build Configurations</span>
<svg style="left:21px;top:696.5px;" width="16" height="16" viewBox="0 0 16 16"><rect x="0.5" y="0.5" width="15" height="15" fill="none" stroke="#e4e4e4" stroke-width="1"/><text x="2.1" y="13" font-family="Liberation Serif, serif" font-weight="bold" font-size="15.4" textLength="8.8" lengthAdjust="spacingAndGlyphs" fill="#86c646">T</text><text x="9.6" y="13" font-family="Liberation Serif, serif" font-weight="bold" font-size="9.8" textLength="4.4" lengthAdjust="spacingAndGlyphs" fill="#86c646">T</text></svg>
<span class="t" style="top:696.5px;line-height:16px;font-size:12px;color:#e8e8e8;-webkit-text-stroke:0.45px #e8e8e8;letter-spacing:-0.064px;left:49px;">Font Families</span>
<svg style="left:21px;top:715.5px;" width="17" height="17" viewBox="0 0 17 17"><path d="M10.37 4.65L10.37 5.75L8.79 6.26L8.49 6.99L9.25 8.47L8.47 9.25L6.99 8.49L6.26 8.79L5.75 10.37L4.65 10.37L4.14 8.79L3.41 8.49L1.93 9.25L1.15 8.47L1.91 6.99L1.61 6.26L0.03 5.75L0.03 4.65L1.61 4.14L1.91 3.41L1.15 1.93L1.93 1.15L3.41 1.91L4.14 1.61L4.65 0.03L5.75 0.03L6.26 1.61L6.99 1.91L8.47 1.15L9.25 1.93L8.49 3.41L8.79 4.14Z" fill="#e4e4e4"/><circle cx="5.2" cy="5.2" r="2.08" fill="#282828"/><path d="M5 12H9.6" stroke="#f6a828" stroke-width="1.3"/><path d="M13.2 9.2H11.6Q9 9.6 9 12Q9 14.4 11.6 14.8H13.2Z" fill="#f6a828"/><path d="M13.2 10.6H16.4M13.2 13.4H16.4" stroke="#f6a828" stroke-width="1.3"/></svg>
<span class="t" style="top:715.5px;line-height:16px;font-size:12px;color:#e8e8e8;-webkit-text-stroke:0.45px #e8e8e8;letter-spacing:-0.051px;left:49px;">Kanzi Engine Plugins</span>
<svg style="left:21px;top:734.5px;" width="16" height="16" viewBox="0 0 16 16"><circle cx="8" cy="7.6" r="4.7" fill="#303030" stroke="#e4e4e4" stroke-width="1"/><path d="M8 3.4Q10.6 4.2 9 6.2Q7.2 7.6 8.8 9Q10.6 9.6 9.6 11.6Q8.4 12.2 7.4 11.4Q7.8 9.4 6.4 8.8Q4.4 8.4 4 6.6Q5 4 8 3.4Z" fill="#f6a030"/><path d="M10.8 5.6Q12.4 7 11.6 9Q10.6 8.2 10.8 5.6Z" fill="#f6a030"/></svg>
<span class="t" style="top:734.5px;line-height:16px;font-size:12px;color:#e8e8e8;-webkit-text-stroke:0.45px #e8e8e8;letter-spacing:0.094px;left:49px;">Localization</span>
<svg style="left:9.2px;top:758.0px;" width="4" height="7" viewBox="0 0 4 7"><path d="M0 0L4 3.5L0 7Z" fill="#e0e0e0"/></svg>
<svg style="left:21px;top:753.5px;" width="16" height="16" viewBox="0 0 16 16"><rect x="1.5" y="1" width="13.5" height="13.5" fill="none" stroke="#e4e4e4" stroke-width="1"/><circle cx="8.2" cy="7.8" r="4.8" fill="#21b08e"/><path d="M5 6.6Q5.6 4.6 7.8 4.2" stroke="#9fe6d2" stroke-width="1" fill="none"/></svg>
<span class="t" style="top:753.5px;line-height:16px;font-size:12px;color:#e8e8e8;-webkit-text-stroke:0.45px #e8e8e8;letter-spacing:0.077px;left:49px;">Materials and Textures</span>
<svg style="left:9.2px;top:777.0px;" width="4" height="7" viewBox="0 0 4 7"><path d="M0 0L4 3.5L0 7Z" fill="#e0e0e0"/></svg>
<svg style="left:21px;top:772.5px;" width="16" height="17" viewBox="0 0 16 17"><path d="M8 1L15 4.4L8 7.8L1 4.4Z" fill="#2fc09e"/><path d="M1 5.6L7.4 8.8V16L1 12.8Z" fill="#f0f0f0"/><path d="M15 5.6L8.6 8.8V16L15 12.8Z" fill="#c4c4c4"/></svg>
<span class="t" style="top:772.5px;line-height:16px;font-size:12px;color:#e8e8e8;-webkit-text-stroke:0.45px #e8e8e8;letter-spacing:-0.155px;left:49px;">Meshes</span>
<svg style="left:21px;top:791.5px;" width="16" height="16" viewBox="0 0 16 16"><path d="M2.6 1.8Q-1 7.6 2.6 13.4M13.4 1.8Q17 7.6 13.4 13.4" stroke="#a582e6" stroke-width="1.2" fill="none" stroke-dasharray="5 1.2"/><path d="M5 4.2Q3 7.6 5 11M11 4.2Q13 7.6 11 11" stroke="#a582e6" stroke-width="1.2" fill="none"/><rect x="4.6" y="6.7" width="6.8" height="1.9" fill="#e4e4e4"/><circle cx="8" cy="7.6" r="2.5" fill="#e4e4e4"/><circle cx="8" cy="7.6" r="1.1" fill="#282828"/></svg>
<span class="t" style="top:791.5px;line-height:16px;font-size:12px;color:#e8e8e8;-webkit-text-stroke:0.45px #e8e8e8;letter-spacing:-0.179px;left:49px;">Message Types</span>
<svg style="left:9.2px;top:815.0px;" width="4" height="7" viewBox="0 0 4 7"><path d="M0 0L4 3.5L0 7Z" fill="#e0e0e0"/></svg>
<svg style="left:21px;top:810.5px;" width="16" height="16" viewBox="0 0 16 16"><rect x="0.5" y="0.5" width="15" height="15" fill="none" stroke="#e4e4e4" stroke-width="1"/><path d="M2.2 4.7H4.8M5.8 4.7H11.2" stroke="#2fa8e8" stroke-width="2.6"/><path d="M10.6 1.7L14.8 4.7L10.6 7.7Z" fill="#2fa8e8"/><path d="M13.8 11.2H11.2M10.2 11.2H4.8" stroke="#2fa8e8" stroke-width="2.6"/><path d="M5.4 8.2L1.2 11.2L5.4 14.2Z" fill="#2fa8e8"/></svg>
<span class="t" style="top:810.5px;line-height:16px;font-size:12px;color:#e8e8e8;-webkit-text-stroke:0.45px #e8e8e8;letter-spacing:-0.074px;left:49px;">Page Transitions</span>
<svg style="left:21px;top:829.5px;" width="16" height="16" viewBox="0 0 16 16"><rect x="1.5" y="0.8" width="13" height="14.4" fill="none" stroke="#e4e4e4" stroke-width="1.1" stroke-dasharray="2.2 1.5"/><path d="M8 3.4L12.6 5.9L8 8.4L3.4 5.9Z" fill="#2fc09e"/><path d="M3.4 7.6L8 10.1L12.6 7.6V9.8L8 12.6L3.4 9.8Z" fill="#2fc09e"/></svg>
<span class="t" style="top:829.5px;line-height:16px;font-size:12px;color:#e8e8e8;-webkit-text-stroke:0.45px #e8e8e8;letter-spacing:-0.114px;left:49px;">Project References</span>
<svg style="left:9.2px;top:853.0px;" width="4" height="7" viewBox="0 0 4 7"><path d="M0 0L4 3.5L0 7Z" fill="#e0e0e0"/></svg>
<svg style="left:21px;top:848.5px;" width="16" height="16" viewBox="0 0 16 16"><path d="M7.1 7.3V2.2L2.2 7.3Z" fill="#dcdcdc"/><path d="M8.3 7.3V2.2L13.2 7.3Z" fill="#b593f5"/><path d="M7.1 8.5V13.6L2.2 8.5Z" fill="#b593f5"/><path d="M8.3 8.5V13.6L13.2 8.5Z" fill="#dcdcdc"/></svg>
<span class="t" style="top:848.5px;line-height:16px;font-size:12px;color:#e8e8e8;-webkit-text-stroke:0.45px #e8e8e8;letter-spacing:0.037px;left:49px;">Property Types</span>
<svg style="left:9.2px;top:872.0px;" width="4" height="7" viewBox="0 0 4 7"><path d="M0 0L4 3.5L0 7Z" fill="#e0e0e0"/></svg>
<svg style="left:21px;top:867.5px;" width="16" height="16" viewBox="0 0 16 16"><rect x="5.6" y="1.6" width="9.4" height="6" rx="1" fill="none" stroke="#e4e4e4" stroke-width="1"/><rect x="3.4" y="3.4" width="9.4" height="6" rx="1" fill="#282828" stroke="#e4e4e4" stroke-width="1"/><rect x="0.8" y="4.8" width="9.4" height="6.6" rx="0.6" fill="#4b8fe9"/><rect x="3.2" y="6.4" width="5.4" height="2.6" fill="#2f6fc9"/></svg>
<span class="t" style="top:867.5px;line-height:16px;font-size:12px;color:#e8e8e8;-webkit-text-stroke:0.45px #e8e8e8;letter-spacing:0.003px;left:49px;">Rendering</span>
<svg style="left:9.2px;top:891.0px;" width="4" height="7" viewBox="0 0 4 7"><path d="M0 0L4 3.5L0 7Z" fill="#e0e0e0"/></svg>
<svg style="left:21px;top:886.5px;" width="17" height="16" viewBox="0 0 17 16"><path d="M0.6 13.4V1.4H5.6L7 3.2H13.6V6" stroke="#7cc044" stroke-width="1.3" fill="#1e1e1e"/><path d="M3.2 6H16.6L14 13.6H0.4Z" fill="#7cc044"/></svg>
<span class="t" style="top:886.5px;line-height:16px;font-size:12px;color:#e8e8e8;-webkit-text-stroke:0.45px #e8e8e8;letter-spacing:-0.288px;left:49px;">Resource Files</span>
<svg style="left:9.2px;top:910.0px;" width="4" height="7" viewBox="0 0 4 7"><path d="M0 0L4 3.5L0 7Z" fill="#e0e0e0"/></svg>
<svg style="left:21px;top:905.5px;" width="16" height="16" viewBox="0 0 16 16"><rect x="2.7" y="1.3" width="6" height="5.8" fill="none" stroke="#f4694a" stroke-width="1.5"/><path d="M10 3.2H12.6V9.6" stroke="#e4e4e4" stroke-width="1.6" fill="none"/><rect x="4" y="9.6" width="5" height="2.3" fill="#e4e4e4"/><circle cx="12.2" cy="11.2" r="1.9" fill="#e4e4e4"/></svg>
<span class="t" style="top:905.5px;line-height:16px;font-size:12px;color:#e8e8e8;-webkit-text-stroke:0.45px #e8e8e8;letter-spacing:-0.001px;left:49px;">State Managers</span>
<svg style="left:9.2px;top:929.0px;" width="4" height="7" viewBox="0 0 4 7"><path d="M0 0L4 3.5L0 7Z" fill="#e0e0e0"/></svg>
<svg style="left:21px;top:924.5px;" width="16" height="16" viewBox="0 0 16 16"><path d="M2.4 1.7L4.1 3.4L2.4 5.1L0.7 3.4Z" fill="#7cc044"/><path d="M2.4 6.7L4.1 8.4L2.4 10.1L0.7 8.4Z" fill="#7cc044"/><path d="M2.4 11.700000000000001L4.1 13.4L2.4 15.1L0.7 13.4Z" fill="#7cc044"/><path d="M7.4 11.700000000000001L9.1 13.4L7.4 15.1L5.7 13.4Z" fill="#7cc044"/><path d="M12.4 11.700000000000001L14.1 13.4L12.4 15.1L10.700000000000001 13.4Z" fill="#7cc044"/><path d="M15 0.8L9.6 5.6L11 7L15.8 1.8Z" fill="#e4e4e4" stroke-dasharray="1 1"/><path d="M9 5.8L10.8 7.6Q10.6 10.4 5.8 11Q7.4 8.6 9 5.8Z" fill="#cfcfcf"/></svg>
<span class="t" style="top:924.5px;line-height:16px;font-size:12px;color:#e8e8e8;-webkit-text-stroke:0.45px #e8e8e8;letter-spacing:-0.298px;left:49px;">Styles</span>
<svg style="left:9.2px;top:948.0px;" width="4" height="7" viewBox="0 0 4 7"><path d="M0 0L4 3.5L0 7Z" fill="#e0e0e0"/></svg>
<svg style="left:21px;top:943.5px;" width="16" height="16" viewBox="0 0 16 16"><path d="M5 5.4L8.2 2L11.4 5.4V6.4H5Z" fill="#e4e4e4"/><circle cx="8.2" cy="4.4" r="0.8" fill="#282828"/><rect x="5.5" y="6.2" width="5.4" height="6.8" fill="none" stroke="#f4694a" stroke-width="1.3"/><rect x="7.3" y="7.6" width="1.8" height="4" fill="#f4694a"/></svg>
<span class="t" style="top:943.5px;line-height:16px;font-size:12px;color:#e8e8e8;-webkit-text-stroke:0.45px #e8e8e8;letter-spacing:-0.315px;left:49px;">Tags</span>
<div style="left:618px;top:639px;width:10.5px;height:17.5px;background:#1c1c1c;border:1px solid #4a4a4a;border-radius:2.5px;"></div>
<svg style="left:619.75px;top:645.75px;" width="7" height="4" viewBox="0 0 7 4"><path d="M0 4H7L3.5 0Z" fill="#8f8f8f"/></svg>
<div style="left:618px;top:659px;width:10.5px;height:254px;background:#1d1d1d;border:1px solid #3f3f3f;border-radius:2.5px;"></div>
<div style="left:618px;top:943.5px;width:10.5px;height:17.5px;background:#1c1c1c;border:1px solid #4a4a4a;border-radius:2.5px;"></div>
<svg style="left:619.75px;top:950.25px;" width="7" height="4" viewBox="0 0 7 4"><path d="M0 0H7L3.5 4Z" fill="#8f8f8f"/></svg>
<div style="left:638px;top:46px;width:980px;height:683px;background:#282828;"></div>
<div style="left:638px;top:24px;width:84px;height:23px;background:#ff9933;border-radius:3px 3px 0 0;"></div>
<svg style="left:642.5px;top:27.1px;" width="15" height="15" viewBox="0 0 15 15"><circle cx="7.5" cy="7.5" r="6.6" fill="none" stroke="#ffc794" stroke-width="0.9"/><path d="M5.6 4.6L10.2 7.5L5.6 10.4Z" fill="#ffd0a8"/></svg>
<span class="t" style="top:27.200000000000003px;line-height:16px;font-size:12px;color:#3a2408;letter-spacing:-0.327px;left:660.5px;">Preview</span>
<div style="left:708px;top:31px;width:10px;height:10px;background:#1e1e1e;"></div>
<svg style="left:713px;top:36px;" width="1" height="1" viewBox="0 0 1 1"><path d="M-3 -3L3 3M3 -3L-3 3" stroke="#6a6a6a" stroke-width="2" fill="none"/></svg>
<div style="left:644px;top:48px;width:30px;height:32px;background:#1e1e1e;border-radius:3px;"></div>
<svg style="left:649.8px;top:53.2px;" width="18" height="22" viewBox="0 0 18 22"><circle cx="7.6" cy="6.6" r="5.2" fill="none" stroke="#0a84d8" stroke-width="2.2"/><path d="M7.3 5.6V20.5L10.6 17.2L12.6 21L14.6 20L12.8 16.4L17.3 15.6Z" fill="#0a84d8" stroke="#1e1e1e" stroke-width="0.8"/></svg>
<svg style="left:651.4px;top:90.2px;" width="13" height="17" viewBox="0 0 13 17"><path d="M0.5 0V14.8L4.2 11.4L6.4 16.4L8.8 15.3L6.6 10.6L12.4 10.2Z" fill="#cdcdcd"/></svg>
<svg style="left:652px;top:125.2px;" width="16" height="13" viewBox="0 0 16 13"><path d="M0 0.6H16M0 12.4H16" stroke="#cdcdcd" stroke-width="1.1"/><rect x="1.2" y="2.3" width="4.1" height="2.3" fill="#cdcdcd"/><rect x="5.9" y="2.3" width="4.1" height="2.3" fill="#cdcdcd"/><rect x="10.6" y="2.3" width="4.1" height="2.3" fill="#cdcdcd"/><rect x="1.2" y="5.3" width="4.1" height="2.3" fill="#cdcdcd"/><rect x="5.9" y="5.3" width="4.1" height="2.3" fill="#cdcdcd"/><rect x="10.6" y="5.3" width="4.1" height="2.3" fill="#cdcdcd"/><rect x="1.2" y="8.3" width="4.1" height="2.3" fill="#cdcdcd"/><rect x="5.9" y="8.3" width="4.1" height="2.3" fill="#cdcdcd"/><rect x="10.6" y="8.3" width="4.1" height="2.3" fill="#cdcdcd"/></svg>
<span class="t" style="left:651.5px;top:156.0px;font-size:15.5px;line-height:16px;font-weight:bold;color:#cdcdcd;">A</span>
<svg style="left:652px;top:158.5px;" width="17" height="16" viewBox="0 0 17 16"><circle cx="13.6" cy="12.8" r="2.2" fill="#cdcdcd"/><path d="M13.6 11V4.2M12 5.6L13.6 3.6L15.2 5.6M12 12.8H5.8M7.2 11.2L5.2 12.8L7.2 14.4" stroke="#cdcdcd" stroke-width="1.1" fill="none"/></svg>
<svg style="left:652px;top:192.8px;" width="16" height="15" viewBox="0 0 16 15"><path d="M8 0L16 4L8 8L0 4Z" fill="#cdcdcd"/><path d="M0.5 7L8 10.7L15.5 7M0.5 10L8 13.7L15.5 10" stroke="#cdcdcd" stroke-width="1.5" fill="none"/></svg>
<svg style="left:652px;top:226.7px;" width="16" height="14" viewBox="0 0 16 14"><path d="M0 7H4.5" stroke="#cdcdcd" stroke-width="1.8"/><path d="M11 3H9Q5 3 5 7Q5 11 9 11H11" stroke="#cdcdcd" stroke-width="1.8" fill="none"/><path d="M10.5 0L15.8 3L10.5 6Z" fill="#cdcdcd"/><path d="M10.5 8L15.8 11L10.5 14Z" fill="#cdcdcd"/></svg>
<svg style="left:652px;top:260.2px;" width="16" height="14.5" viewBox="0 0 16 14.5"><circle cx="3.4" cy="2.6" r="2.5" fill="#cdcdcd"/><circle cx="9" cy="2.6" r="2.5" fill="#cdcdcd"/><rect x="0.5" y="5.4" width="11.3" height="9" fill="#cdcdcd"/><path d="M11.6 9.9L16 6.2V13.6Z" fill="#cdcdcd"/></svg>
<div style="left:1146px;top:53px;width:76px;height:24px;background:#3b3b3b;border:1px solid #1c1c1c;border-radius:3px;"></div>
<svg style="left:1153.5px;top:56.5px;" width="17" height="17" viewBox="0 0 17 17"><path d="M14.2 5.2A6.4 6.4 0 1 0 15 9.6" stroke="#e6e6e6" stroke-width="2.1" fill="none"/><path d="M10 6.6H16V0.6Z" fill="#e6e6e6"/></svg>
<span class="t" style="top:57.599999999999994px;line-height:16px;font-size:12px;color:#e4e4e4;-webkit-text-stroke:0.45px #e4e4e4;letter-spacing:-0.041px;left:1176px;">Restart</span>
<div style="left:1226px;top:52px;width:1px;height:26px;background:#3c3c3c;"></div>
<div style="left:1231px;top:53px;width:40px;height:24px;background:#3b3b3b;border:1px solid #1c1c1c;border-radius:3px;"></div>
<svg style="left:1242.3999999999999px;top:60.0px;" width="16.4" height="10.4" viewBox="0 0 16.4 10.4"><path d="M0.2 5.2Q3.8 0.2 8.2 0.2Q12.6 0.2 16.2 5.2Q12.6 10.2 8.2 10.2Q3.8 10.2 0.2 5.2Z" fill="#dcdcdc"/><circle cx="8" cy="5" r="3" fill="#3b3b3b"/><circle cx="9.6" cy="4" r="1.5" fill="#dcdcdc"/></svg>
<svg style="left:1266.5px;top:55px;" width="3.5" height="3.5" viewBox="0 0 3.5 3.5"><path d="M0 0H3.5V3.5Z" fill="#f0f0f0"/></svg>
<span class="t" style="top:57.400000000000006px;line-height:16px;font-size:12px;color:#b8b8b8;left:1275.4px;">W</span>
<div style="left:1291px;top:53px;width:36px;height:24px;background:#191919;"></div>
<span class="t" style="top:57.400000000000006px;line-height:16px;font-size:12px;color:#f0f0f0;left:1159px;width:300px;text-align:center;">-1</span>
<span class="t" style="top:57.400000000000006px;line-height:16px;font-size:12px;color:#b8b8b8;left:1330.6px;">px</span>
<span class="t" style="top:57.400000000000006px;line-height:16px;font-size:12px;color:#b8b8b8;left:1353px;">H</span>
<div style="left:1367px;top:53px;width:36px;height:24px;background:#191919;"></div>
<span class="t" style="top:57.400000000000006px;line-height:16px;font-size:12px;color:#f0f0f0;left:1235px;width:300px;text-align:center;">-1</span>
<span class="t" style="top:57.400000000000006px;line-height:16px;font-size:12px;color:#b8b8b8;left:1406.6px;">px</span>
<div style="left:1425px;top:52px;width:1px;height:26px;background:#3c3c3c;"></div>
<svg style="left:1440px;top:59.6px;" width="11" height="11" viewBox="0 0 11 11"><circle cx="4" cy="4" r="3" fill="none" stroke="#d8d8d8" stroke-width="1.7"/><path d="M6.3 6.3L10 10" stroke="#d8d8d8" stroke-width="2.4" stroke-linecap="round"/></svg>
<div style="left:1458px;top:53px;width:36px;height:24px;background:#191919;"></div>
<span class="t" style="top:57.400000000000006px;line-height:16px;font-size:12px;color:#f0f0f0;letter-spacing:-0.526px;left:1461.8px;">100%</span>
<div style="left:1499px;top:63px;width:109px;height:4px;background:#1b1b1b;border-radius:2px;"></div>
<div style="left:1521.8px;top:60px;width:9.4px;height:9.4px;background:#d2d2d2;border-radius:50%;"></div>
<div style="left:680px;top:83px;width:928px;height:608px;background:#1e1e1e;"></div>
<div style="left:681px;top:84px;width:926px;height:606px;background:#000000;border:1px solid #ff9933;"></div>
<div style="left:717px;top:148px;width:854px;height:480px;background:linear-gradient(to bottom,rgb(115,115,115) 0.00%,rgb(119,119,119) 2.50%,rgb(133,133,133) 10.83%,rgb(149,149,149) 23.33%,rgb(161,161,161) 36.25%,rgb(171,171,171) 46.25%,rgb(174,174,174) 52.50%,rgb(177,177,177) 58.75%,rgb(177,177,177) 67.50%,rgb(170,170,170) 72.29%,rgb(160,160,160) 76.46%,rgb(153,153,153) 79.58%,rgb(146,146,146) 84.79%,rgb(142,142,142) 90.00%,rgb(140,140,140) 94.17%,rgb(138,138,138) 100.00%);"></div>
<div style="left:717px;top:148px;width:854px;height:480px;background:linear-gradient(to right,rgba(0,0,0,0.1770) 0%,rgba(0,0,0,0.1434) 5%,rgba(0,0,0,0.1133) 10%,rgba(0,0,0,0.0867) 15%,rgba(0,0,0,0.0637) 20%,rgba(0,0,0,0.0442) 25%,rgba(0,0,0,0.0283) 30%,rgba(0,0,0,0.0159) 35%,rgba(0,0,0,0.0071) 40%,rgba(0,0,0,0.0018) 45%,rgba(0,0,0,0.0000) 50%,rgba(0,0,0,0.0022) 55%,rgba(0,0,0,0.0086) 60%,rgba(0,0,0,0.0194) 65%,rgba(0,0,0,0.0344) 70%,rgba(0,0,0,0.0537) 75%,rgba(0,0,0,0.0774) 80%,rgba(0,0,0,0.1053) 85%,rgba(0,0,0,0.1376) 90%,rgba(0,0,0,0.1741) 95%,rgba(0,0,0,0.2150) 100%);-webkit-mask-image:linear-gradient(to bottom,rgba(0,0,0,1.00) 0.00%,rgba(0,0,0,0.86) 23.33%,rgba(0,0,0,0.74) 36.88%,rgba(0,0,0,0.55) 48.33%,rgba(0,0,0,0.36) 56.25%,rgba(0,0,0,0.24) 60.83%,rgba(0,0,0,0.14) 69.17%,rgba(0,0,0,0.10) 81.67%,rgba(0,0,0,0.08) 100.00%);mask-image:linear-gradient(to bottom,rgba(0,0,0,1.00) 0.00%,rgba(0,0,0,0.86) 23.33%,rgba(0,0,0,0.74) 36.88%,rgba(0,0,0,0.55) 48.33%,rgba(0,0,0,0.36) 56.25%,rgba(0,0,0,0.24) 60.83%,rgba(0,0,0,0.14) 69.17%,rgba(0,0,0,0.10) 81.67%,rgba(0,0,0,0.08) 100.00%);"></div>
<svg style="left:717px;top:148px;overflow:hidden;" width="854" height="480" viewBox="717 148 854 480">
<defs>
<filter id="bl1" x="-20%" y="-300%" width="140%" height="700%"><feGaussianBlur stdDeviation="8"/></filter>
<filter id="bl2" x="-20%" y="-300%" width="140%" height="700%"><feGaussianBlur stdDeviation="2.4"/></filter>
<filter id="bl3" x="-10%" y="-50%" width="120%" height="200%"><feGaussianBlur stdDeviation="1.3"/></filter>
<filter id="bl4" x="-10%" y="-50%" width="120%" height="200%"><feGaussianBlur stdDeviation="0.55"/></filter>
<filter id="bl6" x="-20%" y="-300%" width="140%" height="700%"><feGaussianBlur stdDeviation="4.6"/></filter>
<filter id="bl7" x="-10%" y="-50%" width="120%" height="200%"><feGaussianBlur stdDeviation="0.8"/></filter>
<filter id="bl5" x="-10%" y="-50%" width="120%" height="200%"><feGaussianBlur stdDeviation="2.2"/></filter>
<linearGradient id="bodyg" x1="0" y1="362" x2="0" y2="432" gradientUnits="userSpaceOnUse">
<stop offset="0" stop-color="#3a3a3a"/><stop offset="0.4" stop-color="#343434"/><stop offset="0.52" stop-color="#2e2e2e"/><stop offset="0.64" stop-color="#222222"/><stop offset="0.76" stop-color="#1a1a1a"/><stop offset="0.86" stop-color="#1b1b1b"/><stop offset="0.9" stop-color="#0a0a0a"/><stop offset="1" stop-color="#040404"/></linearGradient>
<linearGradient id="hoodg" x1="0" y1="362.5" x2="0" y2="373" gradientUnits="userSpaceOnUse"><stop offset="0" stop-color="#363636"/><stop offset="0.35" stop-color="#454545"/><stop offset="1" stop-color="#686868"/></linearGradient>
<clipPath id="bodyclip"><path d="M995.3 396.3L1003.2 389.2L1014.6 381.3L1025.1 373.4C1030 369.6 1033 367.6 1035.7 366.4C1041 364.2 1046 363.5 1051.5 363.3C1058 363 1064 362.9 1069 362.9C1076 363 1082 363.4 1086.6 363.8L1094 364.8C1090 366.4 1087 369 1085.4 372.5C1085 375 1086 377 1088.4 380C1089.6 381.6 1092 383 1096.6 384.8L1111.4 389.6L1150 383.6L1196 378.6C1206 376.8 1214 374 1221.8 370.7L1239 371.2L1258 373.6L1270 377.4L1288 384L1292.3 388.4L1293.4 398L1292.8 411L1283.5 417L1272 423.6L1270 427.4L1262 431L1019 431.4L1007.6 429.6L999.7 424.4L996.1 420L998.3 416.5L996.1 411.2L996.6 404.2L994.4 400.7Z"/></clipPath>
</defs>
<!-- ground shadow -->
<ellipse cx="1146" cy="441" rx="172" ry="13" fill="#000" opacity="0.22" filter="url(#bl1)"/>
<rect x="1008" y="424" width="276" height="13" rx="6" fill="#000" opacity="0.78" filter="url(#bl6)"/>
<rect x="1020" y="427" width="250" height="6" rx="3" fill="#000" opacity="0.7" filter="url(#bl3)"/>
<!-- body -->
<path d="M995.3 396.3L1003.2 389.2L1014.6 381.3L1025.1 373.4C1030 369.6 1033 367.6 1035.7 366.4C1041 364.2 1046 363.5 1051.5 363.3C1058 363 1064 362.9 1069 362.9C1076 363 1082 363.4 1086.6 363.8L1094 364.8C1090 366.4 1087 369 1085.4 372.5C1085 375 1086 377 1088.4 380C1089.6 381.6 1092 383 1096.6 384.8L1111.4 389.6L1150 383.6L1196 378.6C1206 376.8 1214 374 1221.8 370.7L1239 371.2L1258 373.6L1270 377.4L1288 384L1292.3 388.4L1293.4 398L1292.8 411L1283.5 417L1272 423.6L1270 427.4L1262 431L1019 431.4L1007.6 429.6L999.7 424.4L996.1 420L998.3 416.5L996.1 411.2L996.6 404.2L994.4 400.7Z" fill="url(#bodyg)"/>
<g clip-path="url(#bodyclip)">
 <!-- hood top zone (dark edge -> mid) -->
 <path d="M1020 378L1036 364L1052 361L1096 362L1092 374L1060 373L1040 376L1024 382Z" fill="url(#hoodg)"/>
 <!-- light upper surfaces: hood bands + front fender + door shoulder + rear fender -->
 <path d="M1003 400.6L1016 397.8L1030 396.8L1043 396.4L1058 397.4L1070 399.4L1080 399.7L1094 397.9L1111 394.3L1150 392.2L1190 390.6L1215 390L1222 391.8L1228 397L1236 397.6L1247 396.6L1260 397.8L1272 400.6L1279 404.6L1285 401L1296 384L1270 372L1222 366L1150 380L1111 386L1096.6 384.8L1088.4 380L1086 371.8L1060 372.8L1040 375.6L1024 381.4L1008 392Z" fill="#747474" filter="url(#bl7)"/>
 <path d="M1228 374L1262 377L1282 386L1276 392L1256 388L1234 386Z" fill="#7c7c7c" opacity="0.6" filter="url(#bl5)"/>
 <!-- fade of light near nose and at rear -->
 <path d="M1000 392L1018 384L1026 398L1004 404Z" fill="#2a2a2a" opacity="0.6" filter="url(#bl3)"/>
 <path d="M1272 384L1290 386L1284 404L1270 398Z" fill="#3a3a3a" opacity="0.6" filter="url(#bl3)"/>
 <!-- hood dark lines between bands -->
 <path d="M1024 383C1030 381.4 1036 380.6 1040 380.4C1048 379.8 1054 379.5 1060 379.4C1070 379.2 1080 379 1088 379" stroke="#3a3a3a" stroke-width="1.1" fill="none" filter="url(#bl4)"/>
 <path d="M1016 389C1026 387.2 1034 386.6 1040 386.4C1048 386 1054 385.7 1060 385.6C1072 385.4 1084 385.4 1096 385.6" stroke="#474747" stroke-width="0.9" fill="none" filter="url(#bl4)"/>
 <!-- hood dark top-left slope -->
 <path d="M994 397L1003.2 389.2L1014.6 381.3L1025.1 373.4L1036 366.2" stroke="#262626" stroke-width="5.6" fill="none" opacity="0.95" filter="url(#bl3)"/>
 <!-- nose / bumper dark -->
 <path d="M992 399L1002 404L1012 402.6L1022 399L1028 412L1022 434L990 434Z" fill="#1a1a1a" opacity="0.9" filter="url(#bl3)"/>
 <!-- headlight -->
 <path d="M1002.3 401.6C1006 397.6 1014 394 1020.7 392.8C1021 396 1013 400.4 1004 403.2Z" fill="#101010"/>
 <!-- rear face dark -->
 <path d="M1285 383L1296 386L1296 424L1260 434L1270 418L1281 404Z" fill="#181818" opacity="0.95" filter="url(#bl3)"/>
 <!-- wheel arches -->
 <circle cx="1043.6" cy="420.4" r="24.8" fill="#121212" filter="url(#bl4)"/>
 <circle cx="1247.2" cy="419.8" r="25" fill="#121212" filter="url(#bl4)"/>
 <!-- door seams -->
 <path d="M1094.4 386C1092.8 396 1092.6 410 1093.2 424M1168.4 382C1166 396 1164.8 410 1164.8 424M1222 371C1226 384 1224 400 1214.6 424" stroke="#1c1c1c" stroke-width="0.8" fill="none" opacity="0.75"/>
 <!-- side marker -->
 <rect x="1078" y="399.8" width="8" height="1.1" fill="#7a4a22" opacity="0.8"/>
</g>
<!-- roof / glass (black) -->
<path d="M1085.4 372.5C1088 368 1092 365.5 1096 364C1102 361 1107 359.4 1110 358.2L1113 356L1115.4 356.4C1120 353.6 1126 351 1132 349C1140 346.4 1150 344.6 1158.6 344.3C1168 344 1176 344.4 1183.4 345C1192 345.8 1200 347 1208.2 348.6L1233 354.8L1257.8 360.4L1276.4 365.4C1281 367 1284 368.6 1286 371C1288.4 374 1289.4 378 1288 384L1270 377.4L1258 373.6L1239 371.2L1221.8 370.7C1214 374 1206 376.8 1196 378.6L1150 383.6L1111.4 389.6L1096.6 384.8C1092 383 1089.6 381.6 1088.4 380C1086 377 1085 375 1085.4 372.5Z" fill="#020202"/>
<!-- spoiler -->
<path d="M1266 368.4C1275 366 1283 367.4 1286.2 371C1288.8 374.6 1289.4 379.6 1288 384.4L1271 378.2Z" fill="#262626"/>
<!-- a-pillar and window frame -->
<path d="M1096.6 386C1103 378.6 1112 372 1122 367.4" stroke="#686868" stroke-width="4.4" fill="none"/>
<path d="M1121 367.8C1134 362.6 1146 359.2 1158.6 357.6C1170 356.6 1180 356.6 1190 357.1C1200 357.8 1210 359.2 1219.5 360.8" stroke="#5a5a5a" stroke-width="2.8" fill="none"/>
<!-- mirror -->
<ellipse cx="1107.6" cy="384.2" rx="4.4" ry="3.4" fill="#3c3c3c"/>
<path d="M1103.6 383.4C1105 380.8 1109 380.4 1111.6 382.4" stroke="#707070" stroke-width="1.2" fill="none"/>
<!-- door handles -->
<path d="M1161 393L1163.4 390.6H1166V393Z" fill="none" stroke="#2a2a2a" stroke-width="0.8"/><path d="M1221 388L1223.2 385.8H1225.6V388Z" fill="none" stroke="#2a2a2a" stroke-width="0.8"/>
<circle cx="1043.6" cy="420.4" r="23.2" fill="#1c1c1c"/><circle cx="1043.6" cy="420.4" r="21.2" fill="none" stroke="#262626" stroke-width="1.6"/><circle cx="1043.6" cy="420.4" r="18.6" fill="#0a0a0a"/><circle cx="1043.6" cy="420.4" r="17.5" fill="none" stroke="#707070" stroke-width="1.5"/><circle cx="1043.6" cy="420.4" r="15.6" fill="none" stroke="#3c3c3c" stroke-width="1.4"/><circle cx="1044.6" cy="422.4" r="9" fill="#2a2a2a"/><path d="M1040.2 403.8L1045.2 403.6L1045.6 416.7L1041.2 416.9Z" fill="#868686"/><path d="M1042.9 406.8L1042.7 404.0" stroke="#1a1a1a" stroke-width="1.5"/><path d="M1058.3 412.1L1060.1 416.8L1047.7 421.2L1046.2 417.1Z" fill="#626262"/><path d="M1056.3 415.5L1058.9 414.5" stroke="#1a1a1a" stroke-width="1.5"/><path d="M1056.1 431.8L1052.2 435.0L1044.1 424.6L1047.6 421.8Z" fill="#6a6a6a"/><path d="M1052.2 431.0L1053.9 433.1" stroke="#1a1a1a" stroke-width="1.5"/><path d="M1036.6 435.8L1032.4 433.0L1039.8 422.2L1043.5 424.6Z" fill="#808080"/><path d="M1036.2 431.8L1034.7 434.2" stroke="#1a1a1a" stroke-width="1.5"/><path d="M1026.8 418.5L1028.1 413.6L1040.7 417.4L1039.6 421.6Z" fill="#909090"/><path d="M1030.5 416.9L1027.8 416.2" stroke="#1a1a1a" stroke-width="1.5"/><circle cx="1043.6" cy="420.4" r="4.4" fill="#6a6a6a"/><circle cx="1043.3" cy="419.9" r="3" fill="#858585"/><circle cx="1043.8999999999999" cy="421.0" r="1.6" fill="#5a5a5a"/><circle cx="1247.2" cy="419.8" r="23.2" fill="#1c1c1c"/><circle cx="1247.2" cy="419.8" r="21.2" fill="none" stroke="#262626" stroke-width="1.6"/><circle cx="1247.2" cy="419.8" r="18.6" fill="#0a0a0a"/><circle cx="1247.2" cy="419.8" r="17.5" fill="none" stroke="#707070" stroke-width="1.5"/><circle cx="1247.2" cy="419.8" r="15.6" fill="none" stroke="#3c3c3c" stroke-width="1.4"/><circle cx="1248.2" cy="421.8" r="9" fill="#2a2a2a"/><path d="M1243.8 403.2L1248.8 403.0L1249.2 416.1L1244.8 416.3Z" fill="#868686"/><path d="M1246.5 406.2L1246.3 403.4" stroke="#1a1a1a" stroke-width="1.5"/><path d="M1261.9 411.5L1263.7 416.2L1251.3 420.6L1249.8 416.5Z" fill="#626262"/><path d="M1259.9 414.9L1262.5 413.9" stroke="#1a1a1a" stroke-width="1.5"/><path d="M1259.7 431.2L1255.8 434.4L1247.7 424.0L1251.2 421.2Z" fill="#6a6a6a"/><path d="M1255.8 430.4L1257.5 432.5" stroke="#1a1a1a" stroke-width="1.5"/><path d="M1240.2 435.2L1236.0 432.4L1243.4 421.6L1247.1 424.0Z" fill="#808080"/><path d="M1239.8 431.2L1238.3 433.6" stroke="#1a1a1a" stroke-width="1.5"/><path d="M1230.4 417.9L1231.7 413.0L1244.3 416.8L1243.2 421.0Z" fill="#909090"/><path d="M1234.1 416.3L1231.4 415.6" stroke="#1a1a1a" stroke-width="1.5"/><circle cx="1247.2" cy="419.8" r="4.4" fill="#6a6a6a"/><circle cx="1246.9" cy="419.3" r="3" fill="#858585"/><circle cx="1247.5" cy="420.40000000000003" r="1.6" fill="#5a5a5a"/></svg>
<div style="left:1607px;top:84px;width:11px;height:606px;background:#1d1d1d;"></div>
<div style="left:1607.5px;top:86px;width:9.5px;height:17.5px;background:#1c1c1c;border:1px solid #4a4a4a;border-radius:2.5px;"></div>
<svg style="left:1608.75px;top:92.75px;" width="7" height="4" viewBox="0 0 7 4"><path d="M0 4H7L3.5 0Z" fill="#8f8f8f"/></svg>
<div style="left:1607.5px;top:268px;width:9.5px;height:236px;background:#1d1d1d;border:1px solid #3f3f3f;border-radius:2.5px;"></div>
<div style="left:1607.5px;top:671.5px;width:9.5px;height:17.5px;background:#1c1c1c;border:1px solid #4a4a4a;border-radius:2.5px;"></div>
<svg style="left:1608.75px;top:678.25px;" width="7" height="4" viewBox="0 0 7 4"><path d="M0 0H7L3.5 4Z" fill="#8f8f8f"/></svg>
<div style="left:681px;top:690px;width:937px;height:12px;background:#1d1d1d;"></div>
<div style="left:682.5px;top:691px;width:18px;height:9.5px;background:#1c1c1c;border:1px solid #4a4a4a;border-radius:2.5px;"></div>
<svg style="left:689.5px;top:692.25px;" width="4" height="7" viewBox="0 0 4 7"><path d="M4 0V7L0 3.5Z" fill="#8f8f8f"/></svg>
<div style="left:984px;top:691px;width:320px;height:9.5px;background:#1d1d1d;border:1px solid #3f3f3f;border-radius:2.5px;"></div>
<div style="left:1587px;top:691px;width:18px;height:9.5px;background:#1c1c1c;border:1px solid #4a4a4a;border-radius:2.5px;"></div>
<svg style="left:1594.0px;top:692.25px;" width="4" height="7" viewBox="0 0 4 7"><path d="M0 0V7L4 3.5Z" fill="#8f8f8f"/></svg>
<div style="left:638px;top:729px;width:980px;height:4px;background:#181818;"></div>
<div style="left:638px;top:733px;width:980px;height:23px;background:#1e1e1e;"></div>
<svg style="left:644.8px;top:737.6px;" width="11" height="11" viewBox="0 0 11 11"><path d="M5.3 0L8.5 5.6H2.1Z" fill="#e4e4e4"/><circle cx="2.2" cy="8.5" r="2.1" fill="#e4e4e4"/><rect x="6.3" y="6.4" width="4.3" height="4.2" fill="#e4e4e4"/></svg>
<span class="t" style="top:736.0px;line-height:16px;font-size:12px;color:#e2e2e2;letter-spacing:-0.503px;left:660.2px;">Assets</span>
<svg style="left:705px;top:745px;" width="1" height="1" viewBox="0 0 1 1"><path d="M-3.2 -3.2L3.2 3.2M3.2 -3.2L-3.2 3.2" stroke="#474747" stroke-width="2" fill="none"/></svg>
<svg style="left:718.8px;top:737.4px;" width="14" height="12" viewBox="0 0 14 12"><path d="M0 0H5L6.2 1.6H14V12H0Z" fill="#e4e4e4"/><rect x="0" y="2.6" width="14" height="0.9" fill="#1e1e1e"/><path d="M7.4 4.6L9.6 8H5.2Z" fill="#1e1e1e"/><circle cx="5" cy="9.6" r="1.3" fill="#1e1e1e"/><rect x="7.8" y="8.4" width="2.6" height="2.5" fill="#1e1e1e"/></svg>
<span class="t" style="top:736.0px;line-height:16px;font-size:12px;color:#e2e2e2;letter-spacing:-0.432px;left:736px;">Asset Packages</span>
<svg style="left:828.3px;top:745px;" width="1" height="1" viewBox="0 0 1 1"><path d="M-3.2 -3.2L3.2 3.2M3.2 -3.2L-3.2 3.2" stroke="#474747" stroke-width="2" fill="none"/></svg>
<div style="left:838px;top:733px;width:182.5px;height:23px;background:#282828;border-radius:2px 2px 0 0;"></div>
<div style="left:838px;top:733px;width:2px;height:1px;background:#007acc;"></div>
<div style="left:1018.5px;top:733px;width:2px;height:1px;background:#007acc;"></div>
<svg style="left:845px;top:739px;" width="11" height="10" viewBox="0 0 11 10"><rect x="0.6" y="0.6" width="9.8" height="7" fill="none" stroke="#e4e4e4" stroke-width="1.2"/><rect x="0" y="8.6" width="11" height="1.4" fill="#e4e4e4"/></svg>
<span class="t" style="top:736.9px;line-height:16px;font-size:12px;color:#f0f0f0;letter-spacing:-0.221px;left:859.7px;">State Tools - Camera_Root</span>
<div style="left:1006px;top:740px;width:10px;height:10px;background:#232323;"></div>
<svg style="left:1011px;top:745px;" width="1" height="1" viewBox="0 0 1 1"><path d="M-3.2 -3.2L3.2 3.2M3.2 -3.2L-3.2 3.2" stroke="#555" stroke-width="2" fill="none"/></svg>
<div style="left:638px;top:756px;width:980px;height:38px;background:#282828;"></div>
<div style="left:638px;top:794px;width:980px;height:172px;background:#222222;"></div>
<div style="left:638px;top:966px;width:980px;height:2px;background:#1c1c1c;"></div>
<div style="left:839px;top:795px;width:5px;height:171px;background:#272727;"></div>
<div style="left:645px;top:765px;width:130px;height:21px;background:#ff9933;border-radius:2px;"></div>
<span class="t" style="top:767.7px;line-height:16px;font-size:12px;color:#ffffff;-webkit-text-stroke:0.45px #ffffff;letter-spacing:0.07px;left:658.2px;">Edit State Manager</span>
<div style="left:786px;top:764px;width:1px;height:24px;background:#333;"></div>
<div style="left:797px;top:764.5px;width:122.4px;height:22px;background:#3b3b3b;border:1px solid #1c1c1c;border-radius:3px;"></div>
<svg style="left:803px;top:767.5px;" width="16" height="16" viewBox="0 0 16 16"><rect x="0.6" y="0.6" width="14.8" height="14.8" fill="none" stroke="#e6e6e6" stroke-width="1.2"/><path d="M1 3.6H15" stroke="#e6e6e6" stroke-width="1.2"/><rect x="3.2" y="8" width="5" height="4.4" fill="none" stroke="#e6e6e6" stroke-width="1.2"/><path d="M6 8V5.8H12.4V10H8.4" stroke="#e6e6e6" stroke-width="1.2" fill="none"/></svg>
<span class="t" style="top:768.2px;line-height:16px;font-size:12px;color:#e0e0e0;-webkit-text-stroke:0.45px #e0e0e0;letter-spacing:0.092px;left:824.4px;">Transition Editor</span>
<div style="left:930px;top:764px;width:1px;height:24px;background:#333;"></div>
<div style="left:941px;top:763.5px;width:179px;height:23.5px;background:#2b2b2b;"></div>
<span class="t" style="top:767.9px;line-height:16px;font-size:12px;color:#b8b8b8;letter-spacing:-0.27px;left:954.2px;">Camera_Root State Manager</span>
<div style="left:1130px;top:764px;width:1px;height:24px;background:#333;"></div>
<div style="left:1141px;top:764.5px;width:183px;height:22.5px;background:#1f1f1f;border-radius:2px;"></div>
<span class="t" style="top:768.2px;line-height:16px;font-size:12px;color:#e0e0e0;-webkit-text-stroke:0.45px #e0e0e0;letter-spacing:0.217px;left:1148.2px;">&lt; No Controller Property &gt;</span>
<svg style="left:1307.0px;top:774.1px;" width="8" height="4.6" viewBox="0 0 8 4.6"><path d="M0 0H8L4.0 4.6Z" fill="#dcdcdc"/></svg>
<div style="left:1334.5px;top:764px;width:1px;height:24px;background:#333;"></div>
<div style="left:1365px;top:764px;width:1px;height:24px;background:#333;"></div>
<div style="left:1376.5px;top:764.5px;width:136px;height:22.5px;background:#3b3b3b;border:1px solid #1c1c1c;border-radius:3px;"></div>
<svg style="left:1390px;top:776px;" width="1" height="1" viewBox="0 0 1 1"><path d="M-4.6 0H4.6M0 -4.6V4.6" stroke="#f0f0f0" stroke-width="1.6"/></svg>
<span class="t" style="top:768.2px;line-height:16px;font-size:12px;color:#e0e0e0;-webkit-text-stroke:0.45px #e0e0e0;letter-spacing:-0.059px;left:1403px;">Create State Group</span>
<div style="left:1523.5px;top:764px;width:1px;height:24px;background:#333;"></div>
<div style="left:1529px;top:763.5px;width:84px;height:21px;background:#1f1f1f;"></div>
<span class="t" style="top:766.6px;line-height:16px;font-size:12px;color:#f0f0f0;letter-spacing:-0.198px;left:1542px;">StateGroup</span>
<div style="left:643px;top:797px;width:21px;height:21.5px;background:#292929;border-radius:2px;"></div>
<svg style="left:650px;top:802.6px;" width="8" height="10" viewBox="0 0 8 10"><path d="M0 0V10L8 5Z" fill="#5c5c5c"/></svg>
<div style="left:667.5px;top:797px;width:169.4px;height:21.5px;background:#323232;border-radius:2px;border-bottom:1px solid #1e1e1e;"></div>
<span class="t" style="top:799.6px;line-height:16px;font-size:12px;color:#e0e0e0;-webkit-text-stroke:0.45px #e0e0e0;letter-spacing:0.271px;left:685px;">Any</span>
<svg style="left:744.8px;top:803.2px;" width="14" height="8" viewBox="0 0 14 8"><path d="M0 4H11" stroke="#e6e6e6" stroke-width="1.6"/><path d="M9 0.6L14 4L9 7.4Z" fill="#e6e6e6"/></svg>
<span class="t" style="top:799.6px;line-height:16px;font-size:12px;color:#e0e0e0;-webkit-text-stroke:0.45px #e0e0e0;letter-spacing:0.271px;left:798px;">Any</span>
<div style="left:644.8px;top:938.4px;width:188.6px;height:21.6px;background:#3c3c3c;border:1px solid #1c1c1c;border-radius:2px;"></div>
<svg style="left:690.6px;top:949.6px;" width="1" height="1" viewBox="0 0 1 1"><path d="M-4.8 0H4.8M0 -4.8V4.8" stroke="#f0f0f0" stroke-width="1.7"/></svg>
<span class="t" style="top:941.8px;line-height:16px;font-size:12px;color:#e0e0e0;-webkit-text-stroke:0.45px #e0e0e0;letter-spacing:0.006px;left:702px;">Create Transition</span>
<div style="left:841px;top:796px;width:1px;height:163px;background:#3a3a3a;"></div>
<svg style="left:856px;top:807px;" width="159" height="149" viewBox="0 0 159 149"><rect x="0.5" y="0.5" width="158" height="148" fill="none" stroke="#d0d0d0" stroke-width="1" stroke-dasharray="3.2 2"/></svg>
<svg style="left:935px;top:874px;" width="1" height="1" viewBox="0 0 1 1"><path d="M-4.6 0H4.6M0 -4.6V4.6" stroke="#f0f0f0" stroke-width="1.5"/></svg>
<span class="t" style="top:882.9px;line-height:16px;font-size:12px;color:#c8c8c8;letter-spacing:-0.256px;left:785.2px;width:300px;text-align:center;">Create State</span>
</body></html>
